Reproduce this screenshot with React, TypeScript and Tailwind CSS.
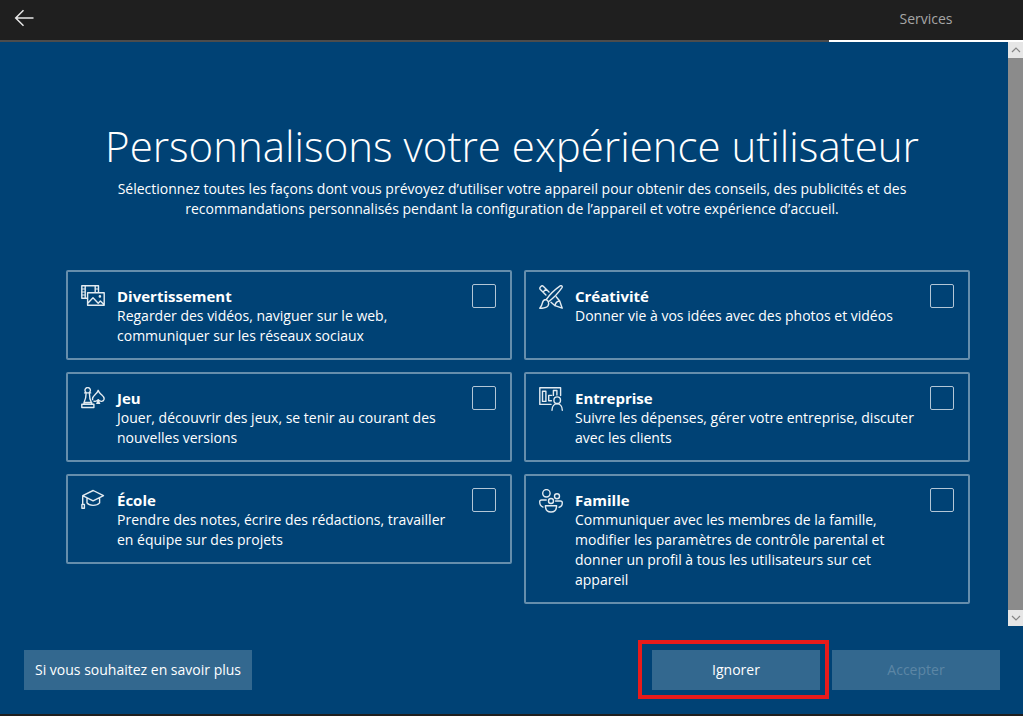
import type { ReactNode } from "react";

function Icon({ children }: { children: ReactNode }) {
  return (
    <svg
      viewBox="0 0 24 24"
      className="mt-px size-6 shrink-0"
      fill="none"
      stroke="#e3ebf1"
      strokeWidth="1.4"
      strokeLinecap="round"
      strokeLinejoin="round"
      aria-hidden="true"
    >
      {children}
    </svg>
  );
}

const movieIcon = (
  <Icon>
    <path d="M6 13.3H.8V.8h16.7V7M4.2.8v12.5M14.2.8V7" />
    <path d="M1 4h2.6M1 7h2.6M1 10h2.6M14.5 4h2.6" strokeWidth="1" />
    <path d="M6.6 7.8h16.6v12.4H6.6zM6.8 18.2l5.2-5.4 5.2 5.4 2.2-2.3 3.6 3.6" />
    <circle cx="18.9" cy="11.4" r=".6" fill="#e3ebf1" />
  </Icon>
);

const gameIcon = (
  <Icon>
    <path d="M5 5.4a2.7 2.7 0 1 1 3.4 0M3.6 5.9h6.1M5.1 6.2c0 3.7-.5 6.4-2.1 9.3M8.4 6.2c0 3.7.4 6.4 2 9.3M3 15.5h7.7v1.7H3zM.8 17.2h12.1v3.3H.8z" />
    <path d="M11.6 12.6c-.7-2.6 1.6-4.2 3.3-5.8 1-.9 1.8-2 2.3-3.5.5 1.5 1.3 2.6 2.3 3.5 1.7 1.7 4 3 3.6 5.4-.5 2.6-3.7 2.9-5.9.6-1.2 1.4-2.9 1.8-4.3 1.4M17.2 12.8c0 1.6-.5 2.6-1.3 3.6h2.7c-.9-1-1.4-2-1.4-3.6" />
  </Icon>
);

const schoolIcon = (
  <Icon>
    <path d="M1.7 6.7 12.2 1.5l10.3 5.2-10.4 5.2zM6 8.9v5c2.2 3.3 9.8 3.3 12.6 0V8.9M1.7 6.7v8.7M.9 15.4h2.5v3.9H.9z" />
  </Icon>
);

const creativeIcon = (
  <Icon>
    <path d="M7.3 14.5C11.5 8.5 16 4.5 21.2.9c1.3-.7 2.5.4 1.8 1.7-3.6 5.2-7.6 9.8-13.5 14.1zM7.3 14.5c-2.3.1-3.5 1.4-3.9 3.4-.3 2-1.1 3.5-2.6 5.3 4.4.5 8.8-.8 8.9-4.8 0-1.9-1.1-3-2.4-3.9z" />
    <path d="M6.9 10 1.4 4.5C-.3 2.7 2.7-.3 4.5 1.4L10 6.9M4 7.1 7.1 4M17.2 11.7l3.5 4.3 2.5 7.2-7.2-2.5-4-3.4M20.7 16c-2.7.2-4.3 1.7-4.7 4.7" />
  </Icon>
);

const businessIcon = (
  <Icon>
    <path d="M12 17.4H.8V.8h20.8v7.8M3.5 4.2h3.4v10.2H3.5zM12.6 8.4H9.7v5.4h2.7M14.4 8.4V3.5h3.5v4.6" />
    <circle cx="18.2" cy="13.2" r="3.3" />
    <path d="M13 23.2c0-8.6 10.3-8.6 10.3 0" />
  </Icon>
);

const familyIcon = (
  <Icon>
    <circle cx="7.4" cy="4.3" r="3.7" />
    <circle cx="18" cy="7.2" r="2.5" />
    <circle cx="12" cy="12" r="2.5" />
    <path d="M7.2 11H2.6C1.3 11 .7 11.8.7 12.8c0 2.8 1 4.5 3.3 5.3M16.6 12h4.8c1.3 0 1.9.7 1.9 1.8 0 2.5-1 4-3.2 4.5M6.4 16.8h11.2c0 3.9-2 6.2-5.6 6.2s-5.6-2.3-5.6-6.2z" />
  </Icon>
);

type Option = { id: string; title: string; text: string; icon: ReactNode };

const columns: Option[][] = [
  [
    { id: "movie", title: "Divertissement", text: "Regarder des vidéos, naviguer sur le web, communiquer sur les réseaux sociaux", icon: movieIcon },
    { id: "game", title: "Jeu", text: "Jouer, découvrir des jeux, se tenir au courant des nouvelles versions", icon: gameIcon },
    { id: "school", title: "École", text: "Prendre des notes, écrire des rédactions, travailler en équipe sur des projets", icon: schoolIcon },
  ],
  [
    { id: "creative", title: "Créativité", text: "Donner vie à vos idées avec des photos et vidéos", icon: creativeIcon },
    { id: "business", title: "Entreprise", text: "Suivre les dépenses, gérer votre entreprise, discuter avec les clients", icon: businessIcon },
    { id: "family", title: "Famille", text: "Communiquer avec les membres de la famille, modifier les paramètres de contrôle parental et donner un profil à tous les utilisateurs sur cet appareil", icon: familyIcon },
  ],
];

function OptionCard({ option }: { option: Option }) {
  return (
    <label
      htmlFor={option.id}
      className="flex min-h-[90px] gap-3 rounded-xs border-2 border-[#668eac] pt-3 pr-3.5 pb-3 pl-[13px]"
    >
      {option.icon}
      <span className="flex-1 pt-0.5 text-sm leading-5">
        <span className="block text-[15px] leading-5 font-bold">{option.title}</span>
        <span className="block max-w-[345px]">{option.text}</span>
      </span>
      <input
        id={option.id}
        type="checkbox"
        className="size-6 shrink-0 appearance-none rounded-xs border border-[#b3c6d6] checked:bg-[#668eac]"
      />
    </label>
  );
}

function ScrollButton({ label, path }: { label: string; path: string }) {
  return (
    <button type="button" aria-label={label} className="flex h-4 items-center justify-center bg-[#e6e6e6]">
      <svg viewBox="0 0 10 6" className="h-1.5 w-2.5" fill="none" stroke="#858585" strokeWidth="1.2" aria-hidden="true">
        <path d={path} />
      </svg>
    </button>
  );
}

export default function App() {
  return (
    <div className="flex min-h-screen flex-col border-b-2 border-[#1f1f1f] bg-[#004275] font-['Open_Sans',sans-serif] text-white">
      <header className="flex h-[42px] justify-between bg-[#1f1f1f]">
        <div className="flex flex-1 items-center border-b-2 border-[#4c4c4c] pb-1 pl-3.5">
          <button type="button" aria-label="Retour">
            <svg viewBox="0 0 20 18" className="h-[18px] w-5" fill="none" stroke="#e6e6e6" strokeWidth="1.5" aria-hidden="true">
              <path d="M1.5 9H19.5M9.5 1.2 1.7 9l7.8 7.8" />
            </svg>
          </button>
        </div>
        <div className="flex w-[194px] items-center justify-center border-b-2 border-white pb-0.5 text-sm text-[#a6a6a6]">
          Services
        </div>
      </header>

      <div className="flex flex-1">
        <main className="flex-1 pt-19 pr-2 pb-5 pl-6">
          <h1 className="text-center text-[42px] leading-[56px] font-light">
            Personnalisons votre expérience utilisateur
          </h1>
          <p className="mx-auto max-w-[830px] pt-[5px] text-center text-sm leading-5">
            Sélectionnez toutes les façons dont vous prévoyez d’utiliser votre appareil pour obtenir des conseils, des
            publicités et des recommandations personnalisés pendant la configuration de l’appareil et votre expérience
            d’accueil.
          </p>
          <div className="pt-[51px] pl-3">
            <div className="mx-auto grid max-w-[904px] grid-cols-2 gap-3">
              {columns.map((options) => (
                <div key={options[0].id} className="flex flex-col gap-3">
                  {options.map((option) => (
                    <OptionCard key={option.id} option={option} />
                  ))}
                </div>
              ))}
            </div>
          </div>
        </main>
        <div className="flex w-[15px] flex-col bg-[#8b8b8b]">
          <ScrollButton label="Défiler vers le haut" path="M1 5l4-4 4 4" />
          <div className="flex-1" />
          <ScrollButton label="Défiler vers le bas" path="M1 1l4 4 4-4" />
        </div>
      </div>

      <footer className="flex items-center justify-between py-6 pr-[23px] pl-6 text-sm">
        <button type="button" className="h-10 bg-[#33688f] px-[11px]">
          Si vous souhaitez en savoir plus
        </button>
        <div className="flex gap-3">
          <div className="relative">
            <button type="button" className="h-10 w-[168px] bg-[#33688f]">
              Ignorer
            </button>
            <div className="pointer-events-none absolute -top-2.5 -right-[9px] -bottom-[9px] -left-3.5 border-4 border-[#e81b1b]" />
          </div>
          <button type="button" disabled className="h-10 w-[168px] bg-[#33688f] text-[#5c86a5]">
            Accepter
          </button>
        </div>
      </footer>
    </div>
  );
}
